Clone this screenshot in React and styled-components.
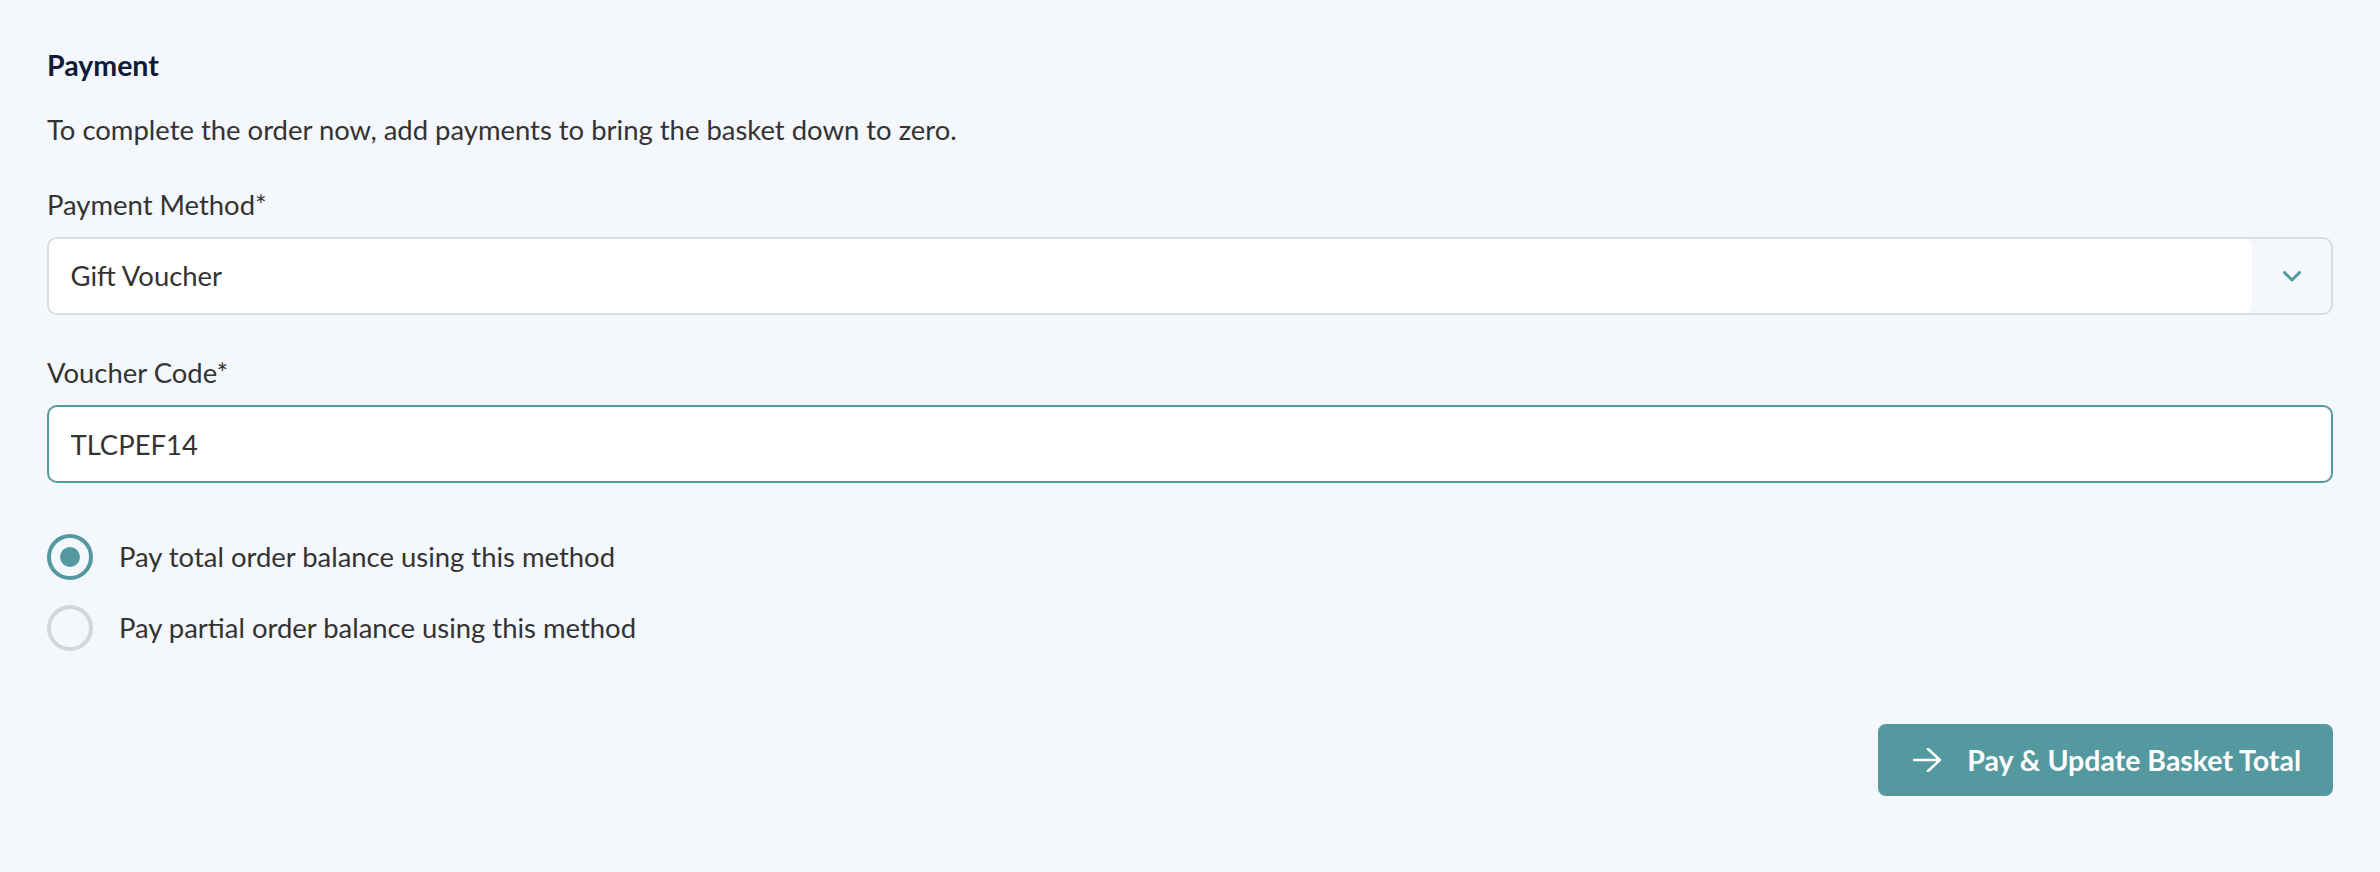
import React, { useState } from "react";
import styled, { createGlobalStyle } from "styled-components";

const GlobalStyle = createGlobalStyle`
  html, body {
    margin: 0;
    padding: 0;
    background: #f4f7fc;
  }
  body {
    font-family: Lato, "Open Sans", sans-serif;
    color: #333333;
  }
`;

const teal = "#5599a0";

export const Page = styled.div`
  padding: 48.5px 47px 60px;
  font-size: 27.45px;
  line-height: 32px;
`;

export const Heading = styled.h2`
  margin: 0;
  font-size: 28.5px;
  line-height: 32px;
  font-weight: 700;
  color: #0f1a3b;
`;

export const Intro = styled.p`
  margin: 33px 0 0;
`;

export const Field = styled.div`
  display: flex;
  flex-direction: column;
  gap: 16.5px;
  margin-top: ${(p) => p.top}px;
`;

export const Label = styled.label`
  display: block;
`;

export const SelectBox = styled.div`
  display: flex;
  height: 78px;
  box-sizing: border-box;
  border: 2px solid #dcdde1;
  border-radius: 10px;
  background: #f4f7fc;
  overflow: hidden;
`;

export const SelectValue = styled.div`
  flex: 1;
  display: flex;
  align-items: center;
  padding-left: 21.5px;
  background: #ffffff;
  border-radius: 8px;
`;

export const SelectAddon = styled.div`
  width: 79px;
  display: flex;
  align-items: center;
  justify-content: center;
`;

export const TextInput = styled.input`
  height: 78px;
  box-sizing: border-box;
  border: 2px solid ${teal};
  border-radius: 10px;
  background: #ffffff;
  padding: 0 21.5px;
  font-family: inherit;
  font-size: 27.45px;
  color: #333333;
  outline: none;
`;

export const RadioGroup = styled.div`
  display: flex;
  flex-direction: column;
  gap: 25px;
  margin-top: 51px;
`;

export const RadioRow = styled.label`
  display: flex;
  align-items: center;
  gap: 26px;
  height: 46px;
  cursor: pointer;
`;

export const RadioCircle = styled.span`
  width: 46px;
  height: 46px;
  box-sizing: border-box;
  border-radius: 50%;
  border: 4.5px solid ${(p) => (p.checked ? teal : "#d3d6da")};
  display: flex;
  align-items: center;
  justify-content: center;
  flex-shrink: 0;

  &::after {
    content: "";
    width: 20px;
    height: 20px;
    border-radius: 50%;
    background: ${(p) => (p.checked ? teal : "transparent")};
  }
`;

export const Actions = styled.div`
  display: flex;
  justify-content: flex-end;
  margin-top: 73px;
`;

export const Button = styled.button`
  display: flex;
  align-items: center;
  gap: 26px;
  height: 72px;
  padding: 0 32px 0 35px;
  border: none;
  border-radius: 8px;
  background: ${teal};
  color: #ffffff;
  font-family: inherit;
  font-size: 28.5px;
  line-height: 32px;
  font-weight: 700;
  cursor: pointer;
`;

const Chevron = () => (
  <svg width="18" height="11" viewBox="0 0 18 11" fill="none">
    <path d="M1.5 1.5 L9 9 L16.5 1.5" stroke={teal} strokeWidth="3" strokeLinecap="round" strokeLinejoin="round" />
  </svg>
);

const Arrow = () => (
  <svg width="28" height="24" viewBox="0 0 28 24" fill="none">
    <path d="M1 12 H27 M15 1 L27 12 L15 23" stroke="#ffffff" strokeWidth="2.5" strokeLinecap="round" strokeLinejoin="round" />
  </svg>
);

const App = () => {
  const [mode, setMode] = useState("total");
  const [code, setCode] = useState("TLCPEF14");

  return (
    <>
      <GlobalStyle />
      <Page>
        <Heading>Payment</Heading>
        <Intro>To complete the order now, add payments to bring the basket down to zero.</Intro>

        <Field top={43}>
          <Label>Payment Method*</Label>
          <SelectBox>
            <SelectValue>Gift Voucher</SelectValue>
            <SelectAddon>
              <Chevron />
            </SelectAddon>
          </SelectBox>
        </Field>

        <Field top={41.5}>
          <Label htmlFor="voucher">Voucher Code*</Label>
          <TextInput id="voucher" value={code} onChange={(e) => setCode(e.target.value)} />
        </Field>

        <RadioGroup>
          <RadioRow onClick={() => setMode("total")}>
            <RadioCircle checked={mode === "total"} />
            Pay total order balance using this method
          </RadioRow>
          <RadioRow onClick={() => setMode("partial")}>
            <RadioCircle checked={mode === "partial"} />
            Pay partial order balance using this method
          </RadioRow>
        </RadioGroup>

        <Actions>
          <Button>
            <Arrow />
            Pay &amp; Update Basket Total
          </Button>
        </Actions>
      </Page>
    </>
  );
};

export default App;
